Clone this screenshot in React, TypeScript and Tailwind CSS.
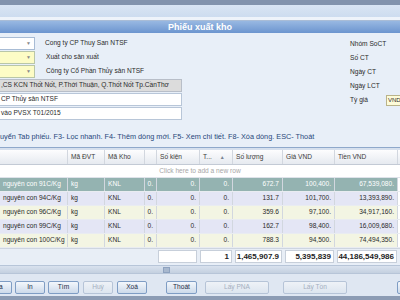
import React from 'react';
import { clsx } from 'clsx';

const cols = ['w-[68px]', 'w-[37px]', 'w-[40px]', 'w-[12px]', 'w-[43px]', 'w-[33px]', 'w-[50px]', 'w-[52px]', 'w-[63px]'];

const rows = [
  { name: 'nguyên con 91C/Kg', sl: '672.7', gia: '100,400.', tien: '67,539,080.' },
  { name: 'nguyên con 94C/Kg', sl: '131.7', gia: '101,700.', tien: '13,393,890.' },
  { name: 'nguyên con 96C/Kg', sl: '359.6', gia: '97,100.', tien: '34,917,160.' },
  { name: 'nguyên con 99C/Kg', sl: '162.7', gia: '98,400.', tien: '16,009,680.' },
  { name: 'nguyên con 100C/Kg', sl: '788.3', gia: '94,500.', tien: '74,494,350.' },
];

const rowBg = ['bg-[#94b3b1] text-white', 'bg-[#e4e6f5]', 'bg-[#f3f5e3]', 'bg-[#e4e6f5]', 'bg-[#f3f5e3]'];

const buttons = [
  { label: 'Sửa', cls: 'ml-[-19px] w-[31px]' },
  { label: 'In', cls: 'ml-[3px] w-[30px]' },
  { label: 'Tìm', cls: 'ml-[3px] w-[31px]' },
  { label: 'Huỷ', cls: 'ml-[4px] w-[30px]', off: true },
  { label: 'Xoá', cls: 'ml-[4px] w-[30px]' },
  { label: 'Thoát', cls: 'ml-[19px] w-[31px]' },
  { label: 'Lấy PNA', cls: 'ml-[8px] w-[64px]', off: true },
  { label: 'Lấy Tồn', cls: 'ml-[14px] w-[64px]', off: true },
  { label: '', cls: 'ml-[50px] w-[30px]' },
];

function Cell({ i, right, children, className }: { i: number; right?: boolean; children?: React.ReactNode; className?: string }) {
  return (
    <div
      className={clsx(
        'h-full shrink-0 flex items-center px-[3px] border-r border-[#d2d7df] overflow-hidden whitespace-nowrap',
        cols[i],
        right ? 'justify-end' : 'justify-start',
        className
      )}
    >
      {children}
    </div>
  );
}

export default function App() {
  return (
    <div className="w-[400px] h-[300px] overflow-hidden flex flex-col font-['Liberation_Sans','DejaVu_Sans',sans-serif] text-[6.6px] leading-none text-[#2a2a2a] bg-[#e8eff8]">
      {/* window chrome */}
      <div className="h-[5px] shrink-0 bg-[#8293ad]" />
      <div className="h-[12px] shrink-0 bg-gradient-to-b from-[#d9e5f4] to-[#cddcef]" />
      <div className="h-[3px] shrink-0 bg-[#eef3fa]" />
      <div className="h-[1px] shrink-0 bg-[#a9bcd6]" />
      <div className="h-[12px] shrink-0 bg-gradient-to-b from-[#98b8e2] to-[#6c95cf] flex items-center justify-center">
        <span className="text-white font-bold text-[9px]">Phiếu xuất kho</span>
      </div>

      {/* form */}
      <div className="shrink-0 flex flex-col pt-[4px] pb-[3px]">
        <div className="flex">
          <div className="w-[182px] shrink-0 flex flex-col gap-[1px]">
            <div className="h-[13px] flex items-center">
              <div className="w-[35px] h-full bg-white border border-l-0 border-[#a8bcd5] flex items-center justify-end pr-[3px] text-[#8a8a8a] text-[5px]">▼</div>
              <span className="ml-[10px]">Cong ty CP Thuy San NTSF</span>
            </div>
            <div className="h-[13px] flex items-center">
              <div className="w-[35px] h-full bg-[#fdfcc6] border border-l-0 border-[#b9c6a8] flex items-center justify-end pr-[3px] text-[#8a8a8a] text-[5px]">▼</div>
              <span className="ml-[11px]">Xuất cho sản xuất</span>
            </div>
            <div className="h-[13px] flex items-center">
              <div className="w-[35px] h-full bg-[#fdfcc6] border border-l-0 border-[#b9c6a8] flex items-center justify-end pr-[3px] text-[#8a8a8a] text-[5px]">▼</div>
              <span className="ml-[11px]">Công ty Cổ Phần Thủy sản NTSF</span>
            </div>
            <div className="h-[13px] bg-[#dcdcdc] border border-l-0 border-[#b8bec8] flex items-center pl-[1px] whitespace-nowrap overflow-hidden">
              ,CS KCN Thốt Nốt, P.Thới Thuận, Q.Thốt Nốt Tp.CầnThơ
            </div>
            <div className="h-[13px] bg-white border border-l-0 border-[#b8c6d8] flex items-center pl-[1px]">CP Thủy sản NTSF</div>
            <div className="h-[13px] bg-white border border-l-0 border-[#b8c6d8] flex items-center pl-[1px]">vào PVSX T01/2015</div>
          </div>
          <div className="flex-1" />
          <div className="w-[50px] shrink-0 flex flex-col">
            <div className="h-[14px] flex items-center">Nhóm SoCT</div>
            <div className="h-[14px] flex items-center">Số CT</div>
            <div className="h-[14px] flex items-center">Ngày CT</div>
            <div className="h-[14px] flex items-center">Ngày LCT</div>
            <div className="h-[14px] flex items-center">
              <span className="w-[36px]">Tỷ giá</span>
              <div className="w-[14px] h-[11px] bg-[#fdfbd8] border border-r-0 border-[#b9b38a] flex items-center pl-[1px] text-[6px]">VND</div>
            </div>
          </div>
        </div>
        <div className="h-[10px] mt-[12px] flex items-center whitespace-nowrap text-[7.3px] text-[#27477a]">
          uyển Tab phiếu. F3- Lọc nhanh. F4- Thêm dòng mới. F5- Xem chi tiết. F8- Xóa dòng. ESC- Thoát
        </div>
      </div>

      {/* splitter */}
      <div className="h-[2px] shrink-0 bg-[#e8eff8]" />
      <div className="h-[1px] shrink-0 bg-[#8ea8cb]" />
      <div className="h-[2px] shrink-0 bg-[#d6e0ee]" />

      {/* grid */}
      <div className="shrink-0 flex flex-col bg-white">
        <div className="h-[15px] flex bg-gradient-to-b from-[#fdfdfe] to-[#e6eaf0] border-b border-[#c3cad5] text-[#3a3a3a]">
          <Cell i={0} className="border-[#c3cad5]" />
          <Cell i={1} className="border-[#c3cad5]">Mã ĐVT</Cell>
          <Cell i={2} className="border-[#c3cad5]">Mã Kho</Cell>
          <Cell i={3} className="border-[#c3cad5]" />
          <Cell i={4} className="border-[#c3cad5]">Số kiện</Cell>
          <Cell i={5} className="border-[#c3cad5]">
            <span>T...</span>
            <span className="ml-[8px] text-[5px] text-[#7a8494]">▲</span>
          </Cell>
          <Cell i={6} className="border-[#c3cad5]">Số lượng</Cell>
          <Cell i={7} className="border-[#c3cad5]">Giá VND</Cell>
          <Cell i={8} className="border-[#c3cad5]">Tiền VND</Cell>
          <div className="flex-1" />
        </div>
        <div className="h-[13px] flex items-center justify-center text-[#a6a6a6] border-b border-[#dfe3ea]">
          Click here to add a new row
        </div>
        {rows.map((r, idx) => (
          <div key={r.name} className={clsx('h-[14px] flex border-b border-[#e9ecf1]', rowBg[idx])}>
            <Cell i={0}>{r.name}</Cell>
            <Cell i={1}>kg</Cell>
            <Cell i={2}>KNL</Cell>
            <Cell i={3} right>0.</Cell>
            <Cell i={4} right>0.</Cell>
            <Cell i={5} right>0.</Cell>
            <Cell i={6} right>{r.sl}</Cell>
            <Cell i={7} right>{r.gia}</Cell>
            <Cell i={8} right>{r.tien}</Cell>
            <div className="flex-1 bg-white" />
          </div>
        ))}
      </div>

      {/* summary */}
      <div className="h-[16px] shrink-0 flex bg-[#e8eef6] border-t border-[#cdd5e0] font-bold text-[8px] text-[#1e1e1e]">
        <div className="w-[157px] shrink-0" />
        <div className="w-[43px] shrink-0 pl-[1px] pr-[3px] py-[1px]"><div className="h-full bg-white border border-[#c7cfda]" /></div>
        <div className="w-[33px] shrink-0 pr-[1px] py-[1px]"><div className="h-full bg-white border border-[#c7cfda] flex items-center justify-end pr-[2px]">1</div></div>
        <div className="w-[50px] shrink-0 pl-[2px] pr-[1px] py-[1px]"><div className="h-full bg-white border border-[#c7cfda] flex items-center justify-end pr-[2px]">1,465,907.9</div></div>
        <div className="w-[52px] shrink-0 pl-[2px] pr-[1px] py-[1px]"><div className="h-full bg-white border border-[#c7cfda] flex items-center justify-end pr-[2px]">5,395,839</div></div>
        <div className="w-[63px] shrink-0 pl-[2px] pr-[1px] py-[1px]"><div className="h-full bg-white border border-[#c7cfda] flex items-center justify-end pr-[2px]">44,186,549,986</div></div>
      </div>

      {/* scrollbar */}
      <div className="h-[1px] shrink-0" />
      <div className="h-[9px] shrink-0 flex items-center bg-gradient-to-b from-[#d9e2ee] to-[#c4d0e0] border-y border-[#b7c5d8]">
        <div className="ml-[163px] w-[7px] h-[6px] bg-[#a8b8ce] border border-[#8ea2bf]" />
      </div>
      <div className="h-[7px] shrink-0 bg-[#dfe7f2]" />

      {/* buttons */}
      <div className="h-[13px] shrink-0 flex bg-[#dfe7f2] overflow-hidden">
        {buttons.map((b, idx) => (
          <div
            key={idx}
            className={clsx(
              'h-full shrink-0 rounded-[2px] border flex items-center justify-center',
              b.cls,
              b.off
                ? 'bg-gradient-to-b from-[#eef2f7] to-[#dde5ef] border-[#b6c4d7] text-[#a4afbf]'
                : 'bg-gradient-to-b from-[#f3f7fc] to-[#cddaea] border-[#7f9dc4] text-[#1d2b46]'
            )}
          >
            {b.label}
          </div>
        ))}
      </div>
      <div className="h-[2px] shrink-0 bg-[#dfe7f2]" />
      <div className="flex-1 bg-[#8c9cb4]" />
    </div>
  );
}
